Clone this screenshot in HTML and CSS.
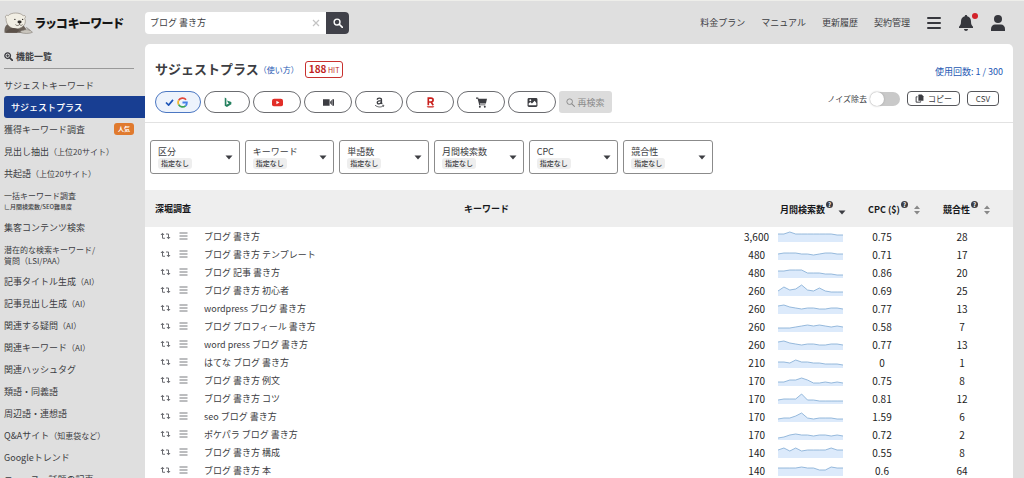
FILE: index.html
```html
<!DOCTYPE html>
<html lang="ja">
<head>
<meta charset="utf-8">
<title>ラッコキーワード</title>
<link rel="stylesheet" href="styles.css">
</head>
<body>
<svg class="defs" aria-hidden="true">
  <symbol id="i-search" viewBox="0 0 16 16"><circle cx="6.5" cy="6.5" r="4.7" fill="none" stroke="currentColor" stroke-width="2.2"/><path d="M10 10l5 5" stroke="currentColor" stroke-width="2.6" stroke-linecap="round"/></symbol>
  <symbol id="i-thin" viewBox="0 0 16 16"><circle cx="6.5" cy="6.5" r="5" fill="none" stroke="currentColor" stroke-width="1.7"/><path d="M10.3 10.3l4.7 4.7" stroke="currentColor" stroke-width="1.8" stroke-linecap="round"/></symbol>
  <symbol id="i-plus" viewBox="0 0 16 16"><circle cx="6.5" cy="6.5" r="5" fill="none" stroke="currentColor" stroke-width="2.4"/><path d="M10.3 10.3l4.7 4.7" stroke="currentColor" stroke-width="3" stroke-linecap="round"/><path d="M6.5 4v5M4 6.5h5" stroke="currentColor" stroke-width="1.8"/></symbol>
  <symbol id="i-repeat" viewBox="0 0 22 14"><path d="M5 4v7.500h5M17 10V3h-5" fill="none" stroke="currentColor" stroke-width="2"/><path d="M1 5l4-4.500L9 5zM13 9h8l-4 4.500z" fill="currentColor"/></symbol>
  <symbol id="i-list" viewBox="0 0 18 16"><path d="M1 2h16M1 8h16M1 14h16" stroke="currentColor" stroke-width="1.8"/></symbol>
  <symbol id="i-sort" viewBox="0 0 8 10"><path d="M1 4l3-3.500L7 4zM1 6h6L4 9.500z" fill="currentColor"/></symbol>
  <symbol id="i-down" viewBox="0 0 8 5"><path d="M.5.500h7L4 4.500z" fill="currentColor"/></symbol>
</svg>
<header class="top">
  <a class="logo" href="#">
    <svg class="otter" viewBox="0 0 56 42" aria-hidden="true">
      <path d="M1 40C0 27 5 22 13 22l22 2c6 4 8 9 8 16z" fill="#6b625a"/>
      <path d="M4 12C1 9 4 4 8 7 13 0 32 0 37 7c4-2 6 2 3 5 4 9-2 18-13 20C14 34 3 25 4 12z" fill="#f1eee4" stroke="#8d857a" stroke-width="1.2"/>
      <ellipse cx="30" cy="19" rx="4" ry="2.8" fill="#302c29"/>
      <circle cx="21" cy="14" r="1.3" fill="#302c29"/><circle cx="36" cy="14" r="1.3" fill="#302c29"/>
      <path d="M30 21v3c-3 3-6 2-8 0m8 0c2 2 4 2 6 0" fill="none" stroke="#4b433c" stroke-width="1.3"/>
      <path d="M3 40c4-9 14-11 22-8l5 2-5 6z" fill="#5b5149"/>
      <path d="M31 39c1-5 15-7 21-3l3 3c-5 3-18 3-24 0z" fill="#c9c5bd" stroke="#77716a"/>
      <path d="M38 35l6-5 6 5" fill="none" stroke="#77716a" stroke-width="1.5"/>
    </svg>
    <span class="logo-text">ラッコキーワード</span>
  </a>
  <form class="search">
    <input class="search-input" type="text" value="ブログ 書き方" aria-label="キーワード">
    <button class="clear" type="button" aria-label="クリア"><svg viewBox="0 0 8 8"><path d="M1 1l6 6M7 1L1 7" stroke="currentColor" stroke-width="1.2"/></svg></button>
    <button class="search-go" type="button" aria-label="検索"><svg><use href="#i-search"/></svg></button>
  </form>
  <nav class="topnav">
    <a href="#">料金プラン</a><a href="#">マニュアル</a><a href="#">更新履歴</a><a href="#">契約管理</a>
    <button class="icon-btn" type="button" aria-label="メニュー"><svg viewBox="0 0 16 16"><path d="M2 3h12M2 8h12M2 13h12" stroke="currentColor" stroke-width="2" stroke-linecap="round"/></svg></button>
    <button class="icon-btn" type="button" aria-label="通知"><svg viewBox="0 0 16 16"><path d="M8 0c.8 0 1.200.5 1.200 1.300C12 2 13 4 13 6.500c0 3 .8 4 2 5.200V13H1v-1.300c1.200-1.200 2-2.200 2-5.200C3 4 4 2 6.800 1.300 6.800.5 7.200 0 8 0zM6 14h4c0 2.600-4 2.600-4 0z" fill="currentColor"/></svg><i class="dot"></i></button>
    <button class="icon-btn" type="button" aria-label="アカウント"><svg viewBox="0 0 16 16"><circle cx="8" cy="4" r="4" fill="currentColor"/><path d="M1 16v-2c0-3 2-4.500 4-4.500h6c2 0 4 1.500 4 4.500v2z" fill="currentColor"/></svg></button>
  </nav>
</header>
<div class="body">
  <aside class="side">
    <h2 class="side-head"><svg><use href="#i-plus"/></svg>機能一覧</h2>
    <nav class="menu">
      <a href="#">サジェストキーワード</a>
      <a class="active" href="#">サジェストプラス</a>
      <a href="#">獲得キーワード調査<span class="hot">人気</span></a>
      <a href="#">見出し抽出<small>（上位20サイト）</small></a>
      <a href="#">共起語<small>（上位20サイト）</small></a>
      <a class="two" href="#">一括キーワード調査<span class="sub">∟月間検索数/SEO難易度</span></a>
      <a href="#">集客コンテンツ検索</a>
      <a class="two" href="#">潜在的な検索キーワード/<br>質問（LSI/PAA）</a>
      <a href="#">記事タイトル生成<small>（AI）</small></a>
      <a href="#">記事見出し生成<small>（AI）</small></a>
      <a href="#">関連する疑問<small>（AI）</small></a>
      <a href="#">関連キーワード<small>（AI）</small></a>
      <a href="#">関連ハッシュタグ</a>
      <a href="#">類語・同義語</a>
      <a href="#">周辺語・連想語</a>
      <a href="#">Q&amp;Aサイト<small>（知恵袋など）</small></a>
      <a href="#">Googleトレンド</a>
      <a href="#">ニュース・話題の記事</a>
    </nav>
  </aside>
  <main class="panel">
    <section class="head">
      <div class="row">
        <h1>サジェストプラス</h1><a class="how" href="#">（使い方）</a>
        <span class="hit"><b>188</b> HIT</span>
        <span class="usage">使用回数: 1 / 300</span>
      </div>
      <div class="row tools">
        <div class="engines">
          <button class="engine on" type="button" aria-label="Google">
            <svg class="check" viewBox="0 0 10 8"><path d="M1 4l3 3 5-6" fill="none" stroke="#1d55b8" stroke-width="1.9"/></svg>
            <svg viewBox="0 0 20 20" fill="none" stroke-width="3.2"><path d="M16.400 5A8 8 0 0 0 3 6.200" stroke="#e2493b"/><path d="M3 6.200a8 8 0 0 0 0 7.600" stroke="#f2b92b"/><path d="M3 13.800A8 8 0 0 0 15.500 16" stroke="#3ba556"/><path d="M15.500 16A8 8 0 0 0 18 10h-8" stroke="#4380e8"/></svg></button>
          <button class="engine bing" type="button" aria-label="Bing"><svg viewBox="0 0 20 20"><path d="M5 1v15l4 2 8-5V9L9 6.500l2 4 2 .8-5 3V2.500z" fill="#25815f"/></svg></button>
          <button class="engine" type="button" aria-label="YouTube"><svg viewBox="0 0 20 20"><rect y="3" width="20" height="14" rx="4" fill="#e22e28"/><path d="M8 7l5.500 3L8 13z" fill="#fff"/></svg></button>
          <button class="engine" type="button" aria-label="動画"><svg viewBox="0 0 20 20"><path d="M0 4h12v12H0zM13 8.500L16 5v10l-3-3.500zM17 4h3v12h-3z" fill="currentColor"/></svg></button>
          <button class="engine" type="button" aria-label="Amazon"><svg viewBox="0 0 20 20" fill="none" stroke="currentColor"><path d="M6 5c0-4 7.500-4 7.500 0v5.500l1.300 2M13 6.500C9 6.500 6 7.500 6 10.200c0 3.500 5.500 3 7.300-.8" stroke-width="2.5"/><path d="M2 15c5 4 11 4 15 1" stroke-width="1.5"/><path d="M14.500 15h3.500l-1 3" stroke-width="1.3"/></svg></button>
          <button class="engine" type="button" aria-label="楽天"><svg viewBox="0 0 20 20" fill="none" stroke="#c9201d"><path d="M6 15V2h5c5 0 5 7 0 7H6m5 0l4 6" stroke-width="3"/><path d="M3 17h14l-2 2H5z" fill="#c9201d" stroke="none"/></svg></button>
          <button class="engine" type="button" aria-label="ショッピング"><svg viewBox="0 0 20 20"><path d="M0 1h4l.6 2H20l-2 9H7l.4 1.500H17V15H6L3 3H0zM7 16a1.800 1.800 0 1 1 0 3.600A1.800 1.800 0 0 1 7 16zm9 0a1.800 1.800 0 1 1 0 3.600 1.800 1.800 0 0 1 0-3.600z" fill="currentColor"/></svg></button>
          <button class="engine" type="button" aria-label="画像"><svg viewBox="0 0 20 20"><rect x="1" y="2" width="18" height="16" rx="2.5" fill="currentColor"/><path d="M3 15v-3l3-3 3 3 5-5 3 4v4z" fill="#fff"/><circle cx="6" cy="6" r="1.7" fill="#fff"/></svg></button>
          <button class="again" type="button" disabled><svg><use href="#i-thin"/></svg>再検索</button>
        </div>
        <div class="actions">
          <label class="noise">ノイズ除去<input class="switch" type="checkbox"></label>
          <button class="small-btn copy" type="button"><svg viewBox="0 0 16 16"><path d="M4.500 5H2v9.500h8V13" fill="none" stroke="currentColor" stroke-width="1.7"/><path d="M7 1h5l3 3v8H6V2q0-1 1-1z" fill="currentColor"/></svg>コピー</button>
          <button class="small-btn" type="button">CSV</button>
        </div>
      </div>
    </section>
    <section class="filters">
      <button class="filter" type="button"><span>区分<em>指定なし</em></span><svg><use href="#i-down"/></svg></button>
      <button class="filter" type="button"><span>キーワード<em>指定なし</em></span><svg><use href="#i-down"/></svg></button>
      <button class="filter" type="button"><span>単語数<em>指定なし</em></span><svg><use href="#i-down"/></svg></button>
      <button class="filter" type="button"><span>月間検索数<em>指定なし</em></span><svg><use href="#i-down"/></svg></button>
      <button class="filter" type="button"><span>CPC<em>指定なし</em></span><svg><use href="#i-down"/></svg></button>
      <button class="filter" type="button"><span>競合性<em>指定なし</em></span><svg><use href="#i-down"/></svg></button>
    </section>
    <table class="grid">
      <colgroup><col class="c-dig"><col><col class="c-vol"><col class="c-trend"><col class="c-cpc"><col class="c-comp"></colgroup>
      <thead><tr>
        <th class="dig">深堀調査</th><th colspan="2">キーワード</th>
        <th class="volh">月間検索数<sup>?</sup><svg class="down"><use href="#i-down"/></svg></th>
        <th class="cpch">CPC ($)<sup>?</sup><svg class="sort"><use href="#i-sort"/></svg></th>
        <th class="comph">競合性<sup>?</sup><svg class="sort"><use href="#i-sort"/></svg></th>
      </tr></thead>
      <tbody id="rows"></tbody>
    </table>
  </main>
</div>
<script src="rows.js"></script>
</body>
</html>
```
FILE: styles.css
```css
* { box-sizing: border-box; }
body {
  margin: 0;
  height: 100vh;
  overflow: hidden;
  display: flex;
  flex-direction: column;
  background: #dfdfdf;
  border-top: 1px solid #eeeeea;
  color: #3c3d42;
  font: 9px/13px "Noto Sans CJK JP", sans-serif;
}
a { color: inherit; text-decoration: none; }
button, input { font: inherit; color: inherit; margin: 0; padding: 0; }
button { background: none; border: 0; }
svg { flex: none; display: block; }
.defs { position: absolute; width: 0; height: 0; }

.top { flex: none; display: flex; align-items: center; height: 43px; padding-right: 18px; }
.logo { flex: none; display: flex; align-items: center; gap: 2px; width: 145px; padding-left: 4px; }
.otter { width: 29px; height: 22px; }
.logo-text { font-size: 12px; line-height: 20px; font-weight: 900; color: #161616; white-space: nowrap; font-feature-settings: "palt"; }
.search { flex: none; display: flex; width: 204px; height: 22px; background: #fff; border-radius: 4px; overflow: hidden; }
.search-input { flex: 1; min-width: 0; border: 0; padding: 0 5px; background: transparent; }
.clear { width: 20px; display: grid; place-items: center; color: #c4c4c4; }
.clear svg { width: 8px; height: 8px; }
.search-go { width: 23px; display: grid; place-items: center; background: #404149; color: #fff; }
.search-go svg { width: 10px; height: 10px; }
.topnav { margin-left: auto; display: flex; align-items: center; gap: 16px; white-space: nowrap; }
.icon-btn { position: relative; width: 16px; height: 16px; color: #36373d; }
.dot { position: absolute; top: -2px; right: -4px; width: 6px; height: 6px; border-radius: 50%; background: #d3232a; }

.body { flex: 1; min-height: 0; display: flex; }
.side { flex: none; width: 145px; padding-left: 4px; }
.side-head { display: flex; align-items: center; gap: 3px; margin: 0 11px 5px 0; padding: 6px 0 5px; border-bottom: 1px solid #999; font-size: 9px; line-height: 13px; font-weight: 700; }
.side-head svg { width: 9px; height: 9px; }
.menu a { display: flex; align-items: center; height: 22px; white-space: nowrap; }
.menu small { font-size: 8px; }
.menu .active { padding-left: 7px; background: #183e92; color: #fff; font-weight: 500; border-radius: 3px 0 0 3px; }
.menu .two { display: block; height: 32px; padding-top: 6px; font-size: 8px; line-height: 11px; }
.sub { display: block; font-size: 6px; line-height: 12px; font-weight: 500; }
.hot { margin: 0 11px 0 auto; padding: 0 4px; border-radius: 3px; background: #e07a2e; color: #fff; font-size: 6px; line-height: 12px; font-weight: 700; }

.panel { flex: 1; min-width: 0; margin-right: 11px; background: #fff; border-radius: 5px 5px 0 0; overflow: hidden; }
.head { padding: 15px 10px 9px; border-bottom: 1px solid #e2e2e2; }
.row { display: flex; align-items: center; }
h1 { margin: 0; font-size: 13px; line-height: 20px; font-weight: 700; }
.how { color: #2458b3; font-size: 8px; }
.hit { margin-left: 6px; padding: 0 3px; border: 1px solid #c8302e; border-radius: 3px; color: #c01f22; font-size: 7px; line-height: 13px; }
.hit b { font-size: 10px; }
.usage { margin-left: auto; padding-top: 4px; color: #2458b3; }
.tools { margin-top: 12px; justify-content: space-between; align-items: flex-start; }
.engines { display: flex; gap: 3px; }
.engine { display: flex; align-items: center; justify-content: center; gap: 3px; width: 48px; height: 22px; border: 1px solid #6b6c70; border-radius: 11px; }
.engine svg { width: 11px; height: 11px; }
.engine .check { width: 9px; height: 7px; }
.engine.on { width: 46px; padding-right: 4px; border-color: #4b77c2; background: #edf3fc; }
.engine.bing { width: 46px; }
.again { display: flex; align-items: center; justify-content: center; gap: 2px; width: 53px; border-radius: 3px; background: #dcdcdc; color: #8a8a8a; }
.again svg { width: 9px; height: 9px; }
.actions { display: flex; align-items: center; gap: 7px; margin-right: 4px; }
.noise { display: flex; align-items: center; gap: 3px; font-size: 8px; }
.switch { appearance: none; width: 30px; height: 14px; border-radius: 7px; background: #c9c9c9; }
.switch::before { content: ""; display: block; width: 14px; height: 14px; border-radius: 50%; background: #fff; box-shadow: 0 0 2px #999; }
.small-btn { display: flex; align-items: center; justify-content: center; gap: 4px; height: 15px; width: 32px; border: 1px solid #55565a; border-radius: 4px; font-size: 8px; }
.small-btn svg { width: 9px; height: 9px; }
.copy { width: 53px; }

.filters { display: grid; grid-template-columns: repeat(6, 1fr); gap: 5px; max-width: 573px; padding: 17px 5px 16px; }
.filter { display: flex; align-items: center; justify-content: space-between; height: 34px; padding: 0 6px 0 7px; border: 1px solid #8b8b8b; border-radius: 3px; text-align: left; }
.filter svg { width: 8px; height: 5px; }
.filter em { display: block; width: max-content; padding: 0 3px; border-radius: 3px; background: #eee; font-size: 7px; line-height: 11px; font-style: normal; font-weight: 500; }

.grid { width: 100%; table-layout: fixed; border-collapse: collapse; }
.c-dig { width: 59px; }
.c-vol { width: 64px; }
.c-trend { width: 82px; }
.c-cpc { width: 70px; }
.c-comp { width: 92px; }
th { height: 37px; padding: 0; background: #eee; color: #16171a; font-weight: 700; white-space: nowrap; }
th.dig { text-align: left; padding-left: 10px; }
th.volh { text-align: right; padding-right: 5px; }
th.cpch { text-align: right; }
th.comph { text-align: right; padding-right: 22px; }
sup { display: inline-block; width: 7px; height: 7px; margin-left: 1px; border-radius: 50%; background: #3c3d42; color: #fff; font-size: 6px; line-height: 7px; text-align: center; vertical-align: 6px; }
th svg { display: inline-block; margin-left: 5px; vertical-align: -2px; color: #888; }
.down { width: 8px; height: 5px; }
th .down { color: #3c3d42; }
.sort { width: 8px; height: 10px; }
td { height: 18px; padding: 0; line-height: 17px; white-space: nowrap; }
.tools-cell { display: flex; align-items: center; gap: 8px; height: 17px; padding-left: 15px; color: #6a6b70; }
.tools-cell .rep { width: 11px; height: 8px; }
.tools-cell .list { width: 9px; height: 8px; }
.kw { overflow: hidden; }
.num { text-align: right; font-size: 10px; color: #222; }
.num.in { padding-right: 4px; }
.mid { text-align: center; font-size: 10px; color: #222; }
.mid.cpc { padding-right: 8px; }
.mid.comp { padding-right: 10px; }
.spark { width: 65px; height: 12px; margin-left: 9px; }
```
FILE: rows.js
```js
const data = [
  ["ブログ 書き方", "3,600", "0.75", "28", [4,4,2,4,4,4,4,4,4,4,5,5]],
  ["ブログ 書き方 テンプレート", "480", "0.71", "17", [6,5,5,5,6,6,7,6,5,5,6,6]],
  ["ブログ 記事 書き方", "480", "0.86", "20", [5,5,4,4,4,7,7,7,8,8,9,9]],
  ["ブログ 書き方 初心者", "260", "0.69", "25", [7,3,6,5,1,6,7,4,7,8,8,8]],
  ["wordpress ブログ 書き方", "260", "0.77", "13", [4,3,5,6,7,6,6,7,7,6,6,7]],
  ["ブログ プロフィール 書き方", "260", "0.58", "7", [8,8,8,7,6,5,6,5,6,7,6,7]],
  ["word press ブログ 書き方", "260", "0.77", "13", [4,3,5,6,7,6,6,7,7,6,6,7]],
  ["はてな ブログ 書き方", "210", "0", "1", [6,6,7,4,6,6,7,7,8,8,8,9]],
  ["ブログ 書き方 例文", "170", "0.75", "8", [8,8,6,6,4,6,9,9,8,9,8,9]],
  ["ブログ 書き方 コツ", "170", "0.81", "12", [8,7,7,7,2,8,8,9,9,9,9,9]],
  ["seo ブログ 書き方", "170", "1.59", "6", [9,8,8,6,3,8,9,8,8,8,9,9]],
  ["ポケパラ ブログ 書き方", "170", "0.72", "2", [10,9,7,6,7,7,8,7,7,8,7,8]],
  ["ブログ 書き方 構成", "140", "0.55", "8", [4,2,5,2,5,4,4,4,4,2,4,4]],
  ["ブログ 書き方 本", "140", "0.6", "64", [4,4,4,4,3,4,4,6,6,3,4,4]]
];

document.getElementById("rows").innerHTML = data.map(([kw, vol, cpc, comp, pts]) => {
  const step = 65 / (pts.length - 1);
  const line = pts.map((y, i) => `${(i * step).toFixed(1)},${y}`).join(" ");
  return `<tr>
    <td><div class="tools-cell"><button type="button" aria-label="再検索"><svg class="rep"><use href="#i-repeat"/></svg></button><button type="button" aria-label="一覧"><svg class="list"><use href="#i-list"/></svg></button></div></td>
    <td class="kw">${kw}</td>
    <td class="num ${vol.includes(",") ? "" : "in"}">${vol}</td>
    <td><svg class="spark" viewBox="0 0 65 12"><polygon points="0,12 ${line} 65,12" fill="#dceafb"/><polyline points="${line}" fill="none" stroke="#7fa9d3" stroke-width=".8"/></svg></td>
    <td class="mid cpc">${cpc}</td>
    <td class="mid comp">${comp}</td>
  </tr>`;
}).join("");
```
